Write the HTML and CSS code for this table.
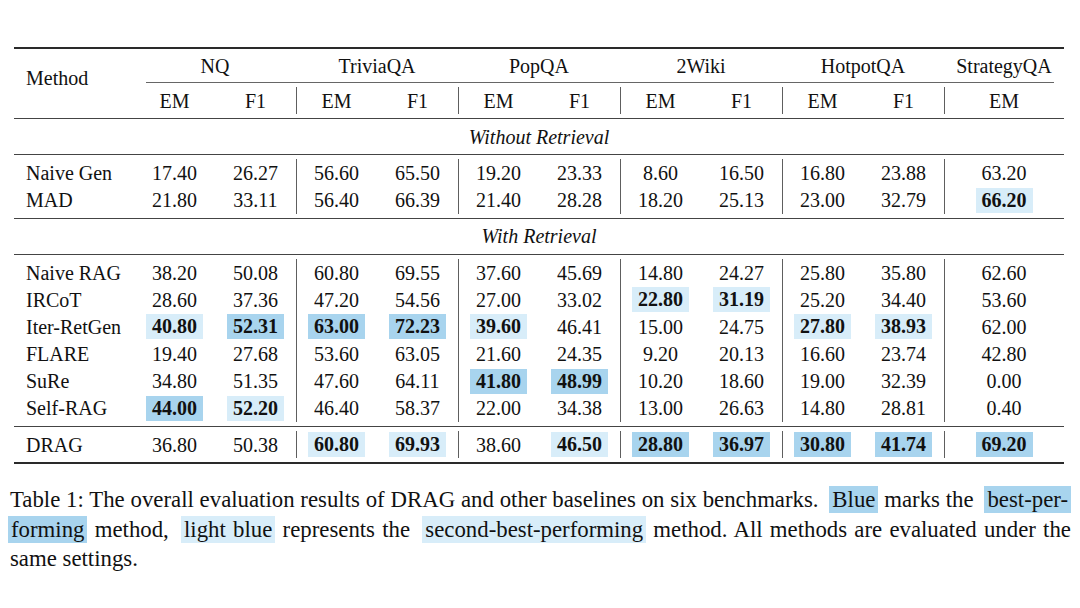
FILE: index.html
```html
<!DOCTYPE html>
<html lang="en">
<head>
<meta charset="utf-8">
<title>Table 1</title>
<link rel="stylesheet" href="styles.css">
</head>
<body>
<main class="page">
  <table class="results">
    <colgroup>
      <col class="c-method">
      <col class="c-num"><col class="c-num"><col class="c-num"><col class="c-num"><col class="c-num">
      <col class="c-num"><col class="c-num"><col class="c-num"><col class="c-num"><col class="c-num">
      <col class="c-last">
    </colgroup>
    <tbody>
      <tr class="rule rule-top"><td colspan="12"><div class="line line-heavy"></div></td></tr>
      <tr class="head1">
        <th rowspan="3" class="method-h">Method</th>
        <th colspan="2">NQ</th>
        <th colspan="2">TriviaQA</th>
        <th colspan="2">PopQA</th>
        <th colspan="2">2Wiki</th>
        <th colspan="2">HotpotQA</th>
        <th>StrategyQA</th>
      </tr>
      <tr class="rule rule-cmid"><td colspan="11"><div class="line line-cmid"></div></td></tr>
      <tr class="head2">
        <th>EM</th><th>F1</th>
        <th class="sep">EM</th><th>F1</th>
        <th class="sep">EM</th><th>F1</th>
        <th class="sep">EM</th><th>F1</th>
        <th class="sep">EM</th><th>F1</th>
        <th class="sep">EM</th>
      </tr>
      <tr class="rule"><td colspan="12"><div class="line"></div></td></tr>
      <tr class="section"><td colspan="12">Without Retrieval</td></tr>
      <tr class="rule"><td colspan="12"><div class="line"></div></td></tr>
      <tr class="data">
        <td class="name">Naive Gen</td>
        <td>17.40</td><td>26.27</td>
        <td class="sep">56.60</td><td>65.50</td>
        <td class="sep">19.20</td><td>23.33</td>
        <td class="sep">8.60</td><td>16.50</td>
        <td class="sep">16.80</td><td>23.88</td>
        <td class="sep">63.20</td>
      </tr>
      <tr class="data">
        <td class="name">MAD</td>
        <td>21.80</td><td>33.11</td>
        <td class="sep">56.40</td><td>66.39</td>
        <td class="sep">21.40</td><td>28.28</td>
        <td class="sep">18.20</td><td>25.13</td>
        <td class="sep">23.00</td><td>32.79</td>
        <td class="sep"><span class="hl second">66.20</span></td>
      </tr>
      <tr class="rule"><td colspan="12"><div class="line"></div></td></tr>
      <tr class="section"><td colspan="12">With Retrieval</td></tr>
      <tr class="rule"><td colspan="12"><div class="line"></div></td></tr>
      <tr class="data">
        <td class="name">Naive RAG</td>
        <td>38.20</td><td>50.08</td>
        <td class="sep">60.80</td><td>69.55</td>
        <td class="sep">37.60</td><td>45.69</td>
        <td class="sep">14.80</td><td>24.27</td>
        <td class="sep">25.80</td><td>35.80</td>
        <td class="sep">62.60</td>
      </tr>
      <tr class="data">
        <td class="name">IRCoT</td>
        <td>28.60</td><td>37.36</td>
        <td class="sep">47.20</td><td>54.56</td>
        <td class="sep">27.00</td><td>33.02</td>
        <td class="sep"><span class="hl second">22.80</span></td><td><span class="hl second">31.19</span></td>
        <td class="sep">25.20</td><td>34.40</td>
        <td class="sep">53.60</td>
      </tr>
      <tr class="data">
        <td class="name">Iter-RetGen</td>
        <td><span class="hl second">40.80</span></td><td><span class="hl best">52.31</span></td>
        <td class="sep"><span class="hl best">63.00</span></td><td><span class="hl best">72.23</span></td>
        <td class="sep"><span class="hl second">39.60</span></td><td>46.41</td>
        <td class="sep">15.00</td><td>24.75</td>
        <td class="sep"><span class="hl second">27.80</span></td><td><span class="hl second">38.93</span></td>
        <td class="sep">62.00</td>
      </tr>
      <tr class="data">
        <td class="name">FLARE</td>
        <td>19.40</td><td>27.68</td>
        <td class="sep">53.60</td><td>63.05</td>
        <td class="sep">21.60</td><td>24.35</td>
        <td class="sep">9.20</td><td>20.13</td>
        <td class="sep">16.60</td><td>23.74</td>
        <td class="sep">42.80</td>
      </tr>
      <tr class="data">
        <td class="name">SuRe</td>
        <td>34.80</td><td>51.35</td>
        <td class="sep">47.60</td><td>64.11</td>
        <td class="sep"><span class="hl best">41.80</span></td><td><span class="hl best">48.99</span></td>
        <td class="sep">10.20</td><td>18.60</td>
        <td class="sep">19.00</td><td>32.39</td>
        <td class="sep">0.00</td>
      </tr>
      <tr class="data">
        <td class="name">Self-RAG</td>
        <td><span class="hl best">44.00</span></td><td><span class="hl second">52.20</span></td>
        <td class="sep">46.40</td><td>58.37</td>
        <td class="sep">22.00</td><td>34.38</td>
        <td class="sep">13.00</td><td>26.63</td>
        <td class="sep">14.80</td><td>28.81</td>
        <td class="sep">0.40</td>
      </tr>
      <tr class="rule"><td colspan="12"><div class="line"></div></td></tr>
      <tr class="data">
        <td class="name">DRAG</td>
        <td>36.80</td><td>50.38</td>
        <td class="sep"><span class="hl second">60.80</span></td><td><span class="hl second">69.93</span></td>
        <td class="sep">38.60</td><td><span class="hl second">46.50</span></td>
        <td class="sep"><span class="hl best">28.80</span></td><td><span class="hl best">36.97</span></td>
        <td class="sep"><span class="hl best">30.80</span></td><td><span class="hl best">41.74</span></td>
        <td class="sep"><span class="hl best">69.20</span></td>
      </tr>
      <tr class="rule rule-bottom"><td colspan="12"><div class="line line-heavy"></div></td></tr>
    </tbody>
  </table>

  <p class="caption">
    <span class="cap-line cap-just">Table 1: The overall evaluation results of DRAG and other baselines on six benchmarks. <span class="mark best gap">Blue</span> marks the <span class="mark best gap">best-per-</span></span>
    <span class="cap-line cap-just"><span class="mark best lead">forming</span> method, <span class="mark second gap">light blue</span> represents the <span class="mark second gap">second-best-performing</span> method. All methods are evaluated under the</span>
    <span class="cap-line">same settings.</span>
  </p>
</main>
</body>
</html>
```

FILE: styles.css
```css
html, body {
  margin: 0;
  padding: 0;
  background: #ffffff;
}

body {
  font-family: "Liberation Serif", "Times New Roman", serif;
  color: #111111;
}

.page {
  width: 1080px;
  height: 608px;
  padding-top: 47px;
  box-sizing: border-box;
  overflow: hidden;
}

/* ---------- table ---------- */
.results {
  margin-left: 14px;
  width: 1050px;
  table-layout: fixed;
  border-collapse: separate;
  border-spacing: 0;
  font-size: 20px;
  line-height: 20px;
}

.c-method { width: 120px; }
.c-num { width: 81px; }
.c-last { width: 120px; }

.results th,
.results td {
  padding: 0;
  text-align: center;
  vertical-align: middle;
  font-weight: normal;
  white-space: nowrap;
}

.results .sep {
  box-shadow: inset 1px 0 0 #5e5e5e;
}

/* rules */
.rule td {
  padding: 4px 0;
  height: auto;
}
.rule-top td { padding: 0 0 4px; }
.rule-bottom td { padding: 4px 0 0; }

.line {
  height: 1px;
  background: #444444;
}
.line-heavy {
  height: 2px;
  background: #2a2a2a;
}
.line-cmid {
  margin-left: 12px;
  margin-right: 10px;
  background: #666666;
}

/* header rows */
.head1 th { height: 25px; }
.head2 th { height: 27.2px; }

.method-h {
  text-align: left !important;
  padding-left: 12px !important;
  padding-bottom: 12px !important;
}

/* sections */
.section td {
  height: 27.2px;
  font-style: italic;
}

/* data rows */
.data td { height: 27.2px; }
.data .name {
  text-align: left;
  padding-left: 12px;
}

.hl {
  display: inline-block;
  padding: 0 6px;
  line-height: 25px;
  font-weight: bold;
}
.hl.best { background: #a8d4ee; }
.hl.second { background: #d8edf9; }

/* ---------- caption ---------- */
.caption {
  margin: 21px 0 0 10px;
  width: 1061px;
  font-size: 22.8px;
  line-height: 29.5px;
  color: #111111;
}

.cap-line {
  display: block;
}
.cap-just {
  text-align: justify;
  text-align-last: justify;
}

.mark {
  padding: 1px 3px;
}
.mark.gap { margin-left: 5px; }
.mark.lead { margin-left: -2px; }
.mark.best { background: #a8d4ee; }
.mark.second { background: #d8edf9; }
```
